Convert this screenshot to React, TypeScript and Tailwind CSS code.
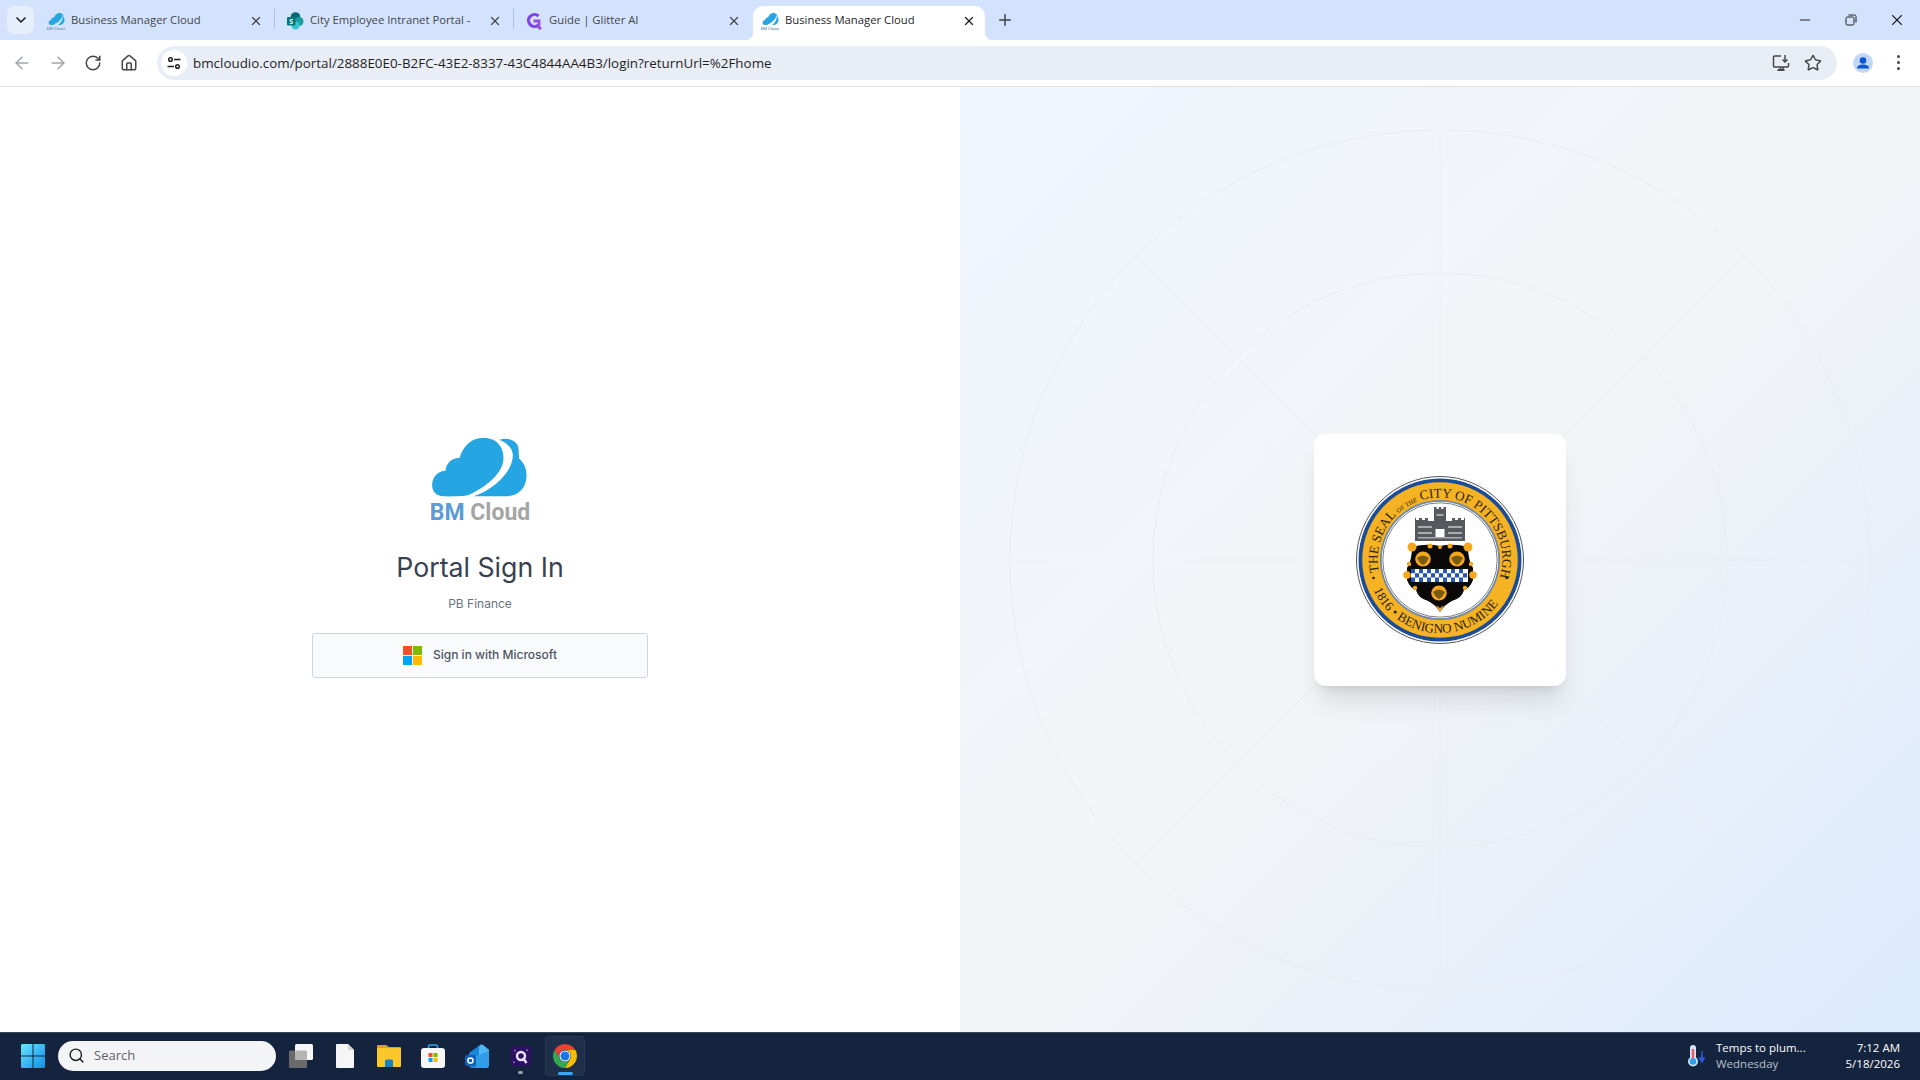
import { ArrowLeft, ArrowRight, ChevronDown, House, Minus, Plus, RotateCw, Search, Star, X } from "lucide-react";

const UI_FONT = "font-['Open_Sans',sans-serif]";

function BmCloud({ className }: { className?: string }) {
  return (
    <svg viewBox="395 50 290 180" className={className} aria-hidden>
      <path
        fill="#25a5e2"
        d="M430 228C408 226 397 212 398 192C399 168 416 152 438 151C440 128 458 112 480 113C490 78 516 52 552 52C590 52 612 78 612 112C612 150 578 190 505 225C490 228 455 229 430 228Z"
      />
      <path
        fill="#25a5e2"
        d="M600 58C620 52 645 56 654 74C660 88 656 104 660 116C674 128 682 146 681 168C680 205 655 228 620 228L522 228C590 205 640 150 640 105C640 85 622 66 600 58Z"
      />
    </svg>
  );
}

function BmFavicon() {
  return (
    <svg viewBox="0 0 18 18" className="h-[18px] w-[18px] shrink-0" aria-hidden>
      <path
        fill="#25a5e2"
        d="M2 12C1 10 2 8.500 4 8C4.500 6 5.500 5.500 7 5.500C8 3 10 1 12.500 1C15 1 15.500 3 15 5C14 8 10 11 6 13C4 13.300 2.800 13 2 12Z"
      />
      <path fill="#25a5e2" d="M14 1.500C16 1.500 16.500 3 16.500 5C17.500 6 18 8 17 10C16 12.500 14 13 11 13C14 11 16.500 7 15.500 3.500C15.200 2.500 14.800 2 14 1.500Z" />
      <text x="9" y="17.500" textAnchor="middle" fontSize="4.200" fontWeight="700" fill="#7b9cc0" fontFamily="'Open Sans',sans-serif">
        BM Cloud
      </text>
    </svg>
  );
}

function SharePointIcon() {
  return (
    <svg viewBox="0 0 18 18" className="h-[18px] w-[18px] shrink-0" aria-hidden>
      <circle cx="9.500" cy="5" r="4.800" fill="#036c70" />
      <circle cx="13" cy="9.500" r="4.500" fill="#1a9ba1" />
      <circle cx="9.500" cy="13.500" r="4" fill="#37c6d0" />
      <rect x="1" y="5" width="8.500" height="8.500" rx="1" fill="#03787c" />
      <text x="5.200" y="12" textAnchor="middle" fontSize="7" fontWeight="700" fill="#fff" fontFamily="'Open Sans',sans-serif">
        S
      </text>
    </svg>
  );
}

function GlitterIcon() {
  return (
    <svg viewBox="0 0 18 18" className="h-[18px] w-[18px] shrink-0" aria-hidden>
      <path d="M13.500 4A6 6 0 1 0 13.500 13" fill="none" stroke="#8142e6" strokeWidth="3.200" />
      <path d="M8.500 9H14V15.500L16 17" fill="none" stroke="#9d4edd" strokeWidth="2.800" />
    </svg>
  );
}

function Tab({
  title,
  icon,
  active,
  separator,
}: {
  title: string;
  icon: React.ReactNode;
  active?: boolean;
  separator?: boolean;
}) {
  if (active) {
    return (
      <div className="relative flex h-[34px] w-[232px] shrink-0 items-center rounded-t-[10px] bg-white pr-[9px] pb-[5px] pl-2">
        <span className="absolute bottom-0 -left-2 h-2 w-2 bg-[radial-gradient(circle_at_0_0,transparent_8px,#fff_8.500px)]" />
        <span className="absolute -right-2 bottom-0 h-2 w-2 bg-[radial-gradient(circle_at_100%_0,transparent_8px,#fff_8.500px)]" />
        {icon}
        <span className="ml-[6px] flex-1 truncate text-[11.300px] text-[#1f1f1f]">{title}</span>
        <X className="h-[14px] w-[14px] text-[#1f1f1f]" strokeWidth={2.200} />
      </div>
    );
  }
  return (
    <div className="relative flex h-[34px] w-[239px] shrink-0 items-center pr-[12px] pb-[5px] pl-[11px]">
      {icon}
      <span className="ml-[6px] flex-1 truncate text-[11.300px] text-[#45474a]">{title}</span>
      <X className="ml-2 h-[14px] w-[14px] text-[#45474a]" strokeWidth={2.200} />
      {separator && <span className="absolute top-[3px] right-0 h-5 w-px bg-[#a8c0e6]" />}
    </div>
  );
}

function RestoreIcon() {
  return (
    <svg viewBox="0 0 12 12" className="h-3 w-3" fill="none" stroke="#1f1f1f" strokeWidth="1" aria-hidden>
      <rect x="1" y="3" width="8" height="8" rx="1.500" />
      <path d="M3.500 1H9.500A1.500 1.500 0 0 1 11 2.500V8.500" />
    </svg>
  );
}

function SiteInfoIcon() {
  return (
    <svg viewBox="0 0 16 16" className="h-4 w-4" fill="none" stroke="#1f1f1f" strokeWidth="1.500" aria-hidden>
      <circle cx="4.500" cy="4.500" r="1.800" />
      <path d="M8 4.500H14.500" />
      <circle cx="11.500" cy="11.500" r="1.800" />
      <path d="M1.500 11.500H8" />
    </svg>
  );
}

function InstallIcon() {
  return (
    <svg viewBox="0 0 18 18" className="h-[18px] w-[18px]" fill="none" stroke="#474747" strokeWidth="1.500" aria-hidden>
      <path d="M9 2H2.500A1 1 0 0 0 1.500 3V12A1 1 0 0 0 2.500 13H15.500A1 1 0 0 0 16.500 12V9" />
      <path d="M5.500 16H12.500" strokeWidth="2" />
      <path d="M8.500 13V15.500M11 13V15.500" />
      <path d="M13 1V8M10.500 5.500L13 8L15.500 5.500" />
    </svg>
  );
}

function Seal() {
  return (
    <svg viewBox="-85 -85 170 170" className="h-[170px] w-[170px]" aria-hidden>
      <defs>
        <path id="seal-top" d="M-61 13A62.400 62.400 0 1 1 61 13" />
        <path id="seal-bottom" d="M-73 0A73 73 0 0 0 73 0" />
      </defs>
      <circle r="83.500" fill="#fff" stroke="#53565c" strokeWidth="1" />
      <circle r="81.500" fill="#1d4c97" />
      <circle r="77.800" fill="#f5b222" />
      <circle r="60" fill="#6d87a8" />
      <circle r="58.300" fill="#fff" />
      <circle r="57.200" fill="none" stroke="#3f4650" strokeWidth="0.700" />
      <text fontFamily="'Liberation Serif',serif" fill="#2b2210" fontSize="13.200">
        <textPath href="#seal-top" startOffset="1">
          THE SEAL <tspan fontSize="6.500">OF THE</tspan> CITY OF PITTSBURGH
        </textPath>
      </text>
      <text fontFamily="'Liberation Serif',serif" fill="#2b2210" fontSize="13">
        <textPath href="#seal-bottom" startOffset="31">
          1816 • BENIGNO NUMINE
        </textPath>
      </text>
      <circle cx="-66.500" cy="18" r="1.300" fill="#2b2210" />
      <circle cx="66.500" cy="18" r="1.300" fill="#2b2210" />
      {/* castle */}
      <path
        fill="#55585c"
        d="M-6 -53H-3.500V-51H-1.200V-53H1.200V-51H3.500V-53H6V-39H12V-42H15V-40H18V-42H21V-40H24V-42H25V-19H-25V-42H-24V-40H-21V-42H-18V-40H-15V-42H-12V-39H-6Z"
      />
      <path fill="#a9abad" d="M-22 -34H-8V-32H-22ZM8 -34H22V-32H8ZM-3.500 -46H3.500V-44H-3.500ZM-22 -28H-8V-26H-22ZM8 -28H22V-26H8ZM-22 -23H22V-21.500H-22Z" />
      <rect x="-4.500" y="-31" width="9" height="8" fill="#fff" />
      {/* shield */}
      <path
        fill="#0b0907"
        d="M-28 -13Q-14 -17 0 -14Q14 -17 28 -13Q28 0 33 8V20Q30 28 24 30Q22 38 12 41Q4 45 0 52Q-4 45 -12 41Q-22 38 -24 30Q-30 28 -33 20V8Q-28 0 -28 -13Z"
      />
      <g fill="#f5a81c">
        <circle cx="-28" cy="-13" r="4.500" />
        <circle cx="28" cy="-13" r="4.500" />
        <circle cx="-10" cy="-14" r="2.500" />
        <circle cx="10" cy="-14" r="2.500" />
        <circle cx="0" cy="-13" r="2" />
        <circle cx="-33" cy="15" r="3.800" />
        <circle cx="33" cy="15" r="3.800" />
        <circle cx="-31" cy="4" r="2.200" />
        <circle cx="31" cy="4" r="2.200" />
        <circle cx="-25" cy="28" r="2.200" />
        <circle cx="25" cy="28" r="2.200" />
        <path d="M-4 45L0 52L4 45L0 48Z" />
        <ellipse cx="-17" cy="-1" rx="7.800" ry="7.500" />
        <ellipse cx="17" cy="-1" rx="7.800" ry="7.500" />
        <ellipse cx="-1" cy="33" rx="7.800" ry="7.500" />
      </g>
      <g fill="#7a5a10">
        <path d="M-23 -2Q-17 -7 -11 -2L-14 3L-17 5L-20 3Z" />
        <path d="M11 -2Q17 -7 23 -2L20 3L17 5L14 3Z" />
        <path d="M-7 32Q-1 27 5 32L2 37L-1 39L-4 37Z" />
      </g>
      {/* chequy band */}
      <rect x="-29" y="9" width="57" height="13" fill="#fff" />
      <g fill="#2456b5">
        <path d="M-29 9h4v4.300h-4zM-21 9h4v4.300h-4zM-13 9h4v4.300h-4zM-5 9h4v4.300h-4zM3 9h4v4.300h-4zM11 9h4v4.300h-4zM19 9h4v4.300h-4z" />
        <path d="M-25 13.300h4v4.300h-4zM-17 13.300h4v4.300h-4zM-9 13.300h4v4.300h-4zM-1 13.300h4v4.300h-4zM7 13.300h4v4.300h-4zM15 13.300h4v4.300h-4zM23 13.300h4v4.300h-4z" />
        <path d="M-29 17.600h4v4.400h-4zM-21 17.600h4v4.400h-4zM-13 17.600h4v4.400h-4zM-5 17.600h4v4.400h-4zM3 17.600h4v4.400h-4zM11 17.600h4v4.400h-4zM19 17.600h4v4.400h-4z" />
      </g>
    </svg>
  );
}

function Backdrop() {
  return (
    <svg viewBox="0 0 960 946" className="absolute inset-0 h-full w-full" fill="none" stroke="#eaecf0" aria-hidden>
      <circle cx="480" cy="473" r="430" />
      <circle cx="480" cy="473" r="287" />
      <path d="M480 43V903M50 473H910" />
      <path d="M176 169L784 777M784 169L176 777" />
    </svg>
  );
}

function WindowsLogo() {
  return (
    <svg viewBox="0 0 24 24" className="h-6 w-6" aria-hidden>
      <defs>
        <linearGradient id="win-g" x1="0" y1="0" x2="1" y2="1">
          <stop offset="0" stopColor="#6be3ff" />
          <stop offset="1" stopColor="#0f8fe8" />
        </linearGradient>
      </defs>
      <path fill="url(#win-g)" d="M0 1.500A1.500 1.500 0 0 1 1.500 0H11.500V11.500H0ZM12.500 0H22.500A1.500 1.500 0 0 1 24 1.500V11.500H12.500ZM0 12.500H11.500V24H1.500A1.500 1.500 0 0 1 0 22.500ZM12.500 12.500H24V22.500A1.500 1.500 0 0 1 22.500 24H12.500Z" />
    </svg>
  );
}

function TaskViewIcon() {
  return (
    <svg viewBox="0 0 24 24" className="h-6 w-6" aria-hidden>
      <rect x="0" y="6.500" width="18" height="17.500" rx="1.500" fill="#6b6b6b" />
      <rect x="6" y="0" width="18" height="16" rx="1.500" fill="#f7f7f7" />
      <rect x="6" y="6.500" width="12" height="9.500" rx="1" fill="#b5b5b5" />
    </svg>
  );
}

function FileIcon() {
  return (
    <svg viewBox="0 0 18 24" className="h-6 w-[18px]" aria-hidden>
      <path d="M1 0H12L18 6V23A1 1 0 0 1 17 24H1A1 1 0 0 1 0 23V1A1 1 0 0 1 1 0Z" fill="#f6f6f6" />
      <path d="M12 0L18 6H13A1 1 0 0 1 12 5Z" fill="#d5d5d5" />
    </svg>
  );
}

function ExplorerIcon() {
  return (
    <svg viewBox="0 0 24 22" className="h-[22px] w-6" aria-hidden>
      <path d="M1 0H9L12 2H23A1 1 0 0 1 24 3V8H0V1A1 1 0 0 1 1 0Z" fill="#d9a21b" />
      <rect x="0" y="3" width="24" height="19" rx="1" fill="#fcc62d" />
      <path d="M8 16A1.500 1.500 0 0 1 9.500 14.500H14.500A1.500 1.500 0 0 1 16 16V22H8Z" fill="#1a7fc4" />
    </svg>
  );
}

function StoreIcon() {
  return (
    <svg viewBox="0 0 24 24" className="h-6 w-6" aria-hidden>
      <path d="M7.500 5V2.500A1.500 1.500 0 0 1 9 1H15A1.500 1.500 0 0 1 16.500 2.500V5" fill="none" stroke="#29a7e8" strokeWidth="1.600" />
      <rect x="0" y="4" width="24" height="20" rx="3" fill="#f7f7f7" />
      <rect x="7.500" y="9" width="4" height="4" fill="#f25022" />
      <rect x="12.500" y="9" width="4" height="4" fill="#7fba00" />
      <rect x="7.500" y="14" width="4" height="4" fill="#00a4ef" />
      <rect x="12.500" y="14" width="4" height="4" fill="#ffb900" />
    </svg>
  );
}

function OutlookIcon() {
  return (
    <svg viewBox="0 0 24 24" className="h-6 w-6" aria-hidden>
      <path d="M4 9L15 1Q16.500 0 18 1L24 6V21A3 3 0 0 1 21 24H7A3 3 0 0 1 4 21Z" fill="#1a86d9" />
      <path d="M14 3L15 1Q16.500 0 18 1L24 6V13L14 16Z" fill="#4fb6ef" />
      <path d="M9 13L24 7V21A3 3 0 0 1 21 24H11Z" fill="#2f9de8" />
      <rect x="0" y="11" width="11" height="11" rx="2" fill="#0f5fb3" />
      <circle cx="5.500" cy="16.500" r="2.600" fill="none" stroke="#fff" strokeWidth="1.500" />
    </svg>
  );
}

function ClipIcon() {
  return (
    <svg viewBox="0 0 20 20" className="h-5 w-5" aria-hidden>
      <rect width="20" height="20" rx="4" fill="#2e1065" />
      <circle cx="10" cy="10" r="4" fill="none" stroke="#e9e4ff" strokeWidth="2.400" />
      <path d="M12 12L15.500 17" stroke="#e9e4ff" strokeWidth="2.400" />
      <path d="M4 3.500L5 5.500L3 5ZM16 3L17 5L15 4.500ZM3 15L4 17L2 16.500Z" fill="#c4b5fd" />
    </svg>
  );
}

function ChromeIcon() {
  return (
    <svg viewBox="0 0 24 24" className="h-6 w-6" aria-hidden>
      <path d="M12 6H22.390A12 12 0 0 0 1.610 6L6.800 15A6 6 0 0 1 12 6Z" fill="#ea4335" />
      <path d="M12 6H22.390A12 12 0 0 1 12 24L17.200 15A6 6 0 0 0 12 6Z" fill="#fbbc04" />
      <path d="M1.610 6A12 12 0 0 0 12 24L17.200 15A6 6 0 0 1 6.800 15Z" fill="#34a853" />
      <circle cx="12" cy="12" r="5.600" fill="#fff" />
      <circle cx="12" cy="12" r="4.500" fill="#1a73e8" />
    </svg>
  );
}

function ThermometerIcon() {
  return (
    <svg viewBox="0 0 18 22" className="h-[22px] w-[18px]" aria-hidden>
      <path d="M3 3A3 3 0 0 1 9 3V12.500A5 5 0 1 1 3 12.500Z" fill="#cfe6fb" />
      <rect x="4.800" y="4" width="2.400" height="10" fill="#f0566a" />
      <circle cx="6" cy="16.500" r="3.300" fill="#2f9ee8" />
      <path d="M15 6V15M12.500 13L15 17L17.500 13Z" stroke="#2b5ad8" strokeWidth="1.500" fill="#2b5ad8" />
    </svg>
  );
}

export default function App() {
  return (
    <div className={`relative flex h-screen w-full flex-col overflow-hidden bg-white ${UI_FONT}`}>
      {/* tab strip */}
      <div className="flex h-10 shrink-0 items-end bg-[#d3e3fd]">
        <div className="mb-[6px] ml-[7px] flex h-[28px] w-[27px] shrink-0 items-center justify-center rounded-lg bg-[#e6eefc]">
          <ChevronDown className="h-4 w-4 text-[#1f1f1f]" strokeWidth={2.500} />
        </div>
        <div className="ml-[2px] flex items-end">
          <Tab title="Business Manager Cloud" icon={<BmFavicon />} separator />
          <Tab title="City Employee Intranet Portal -" icon={<SharePointIcon />} separator />
          <Tab title="Guide | Glitter AI" icon={<GlitterIcon />} />
          <Tab title="Business Manager Cloud" icon={<BmFavicon />} active />
        </div>
        <div className="mb-[6px] ml-[6px] flex h-7 w-7 items-center justify-center">
          <Plus className="h-[18px] w-[18px] text-[#3c4043]" strokeWidth={2} />
        </div>
        <div className="ml-auto flex h-10 items-center self-start">
          <div className="flex w-[46px] justify-center">
            <Minus className="h-4 w-4 text-[#1f1f1f]" strokeWidth={1.500} />
          </div>
          <div className="flex w-[46px] justify-center">
            <RestoreIcon />
          </div>
          <div className="flex w-[46px] justify-center">
            <X className="h-[18px] w-[18px] text-[#1f1f1f]" strokeWidth={1.500} />
          </div>
        </div>
      </div>

      {/* toolbar */}
      <div className="flex h-[47px] shrink-0 items-center rounded-t-[8px] border-b border-[#e3e3e3] bg-white pb-px pl-[12px] pr-[20px]">
        <div className="flex items-center gap-[16px]">
          <ArrowLeft className="h-5 w-5 text-[#a0a3a8]" strokeWidth={1.800} />
          <ArrowRight className="h-5 w-5 text-[#a0a3a8]" strokeWidth={1.800} />
          <RotateCw className="h-[18px] w-[18px] text-[#474747]" strokeWidth={2} />
          <House className="ml-[2px] h-[18px] w-[18px] text-[#474747]" strokeWidth={2} />
        </div>
        <div className="ml-[19px] flex h-[34px] flex-1 items-center rounded-[17px] bg-[#e9eef6] pl-1">
          <div className="flex h-[26px] w-[26px] items-center justify-center rounded-full bg-white">
            <SiteInfoIcon />
          </div>
          <span className="ml-[6px] pt-px text-[13.400px] text-[#1f1f1f]">
            bmcloudio.com/portal/2888E0E0-B2FC-43E2-8337-43C4844AA4B3/login?returnUrl=%2Fhome
          </span>
          <div className="ml-auto flex items-center gap-[14px] pr-[15px]">
            <InstallIcon />
            <Star className="h-[18px] w-[18px] text-[#474747]" strokeWidth={2} />
          </div>
        </div>
        <div className="ml-4 flex h-5 w-5 items-center justify-center rounded-full bg-[#c2d7f8]">
          <svg viewBox="0 0 20 20" className="h-5 w-5" fill="#0b57d0" aria-hidden>
            <circle cx="10" cy="7.500" r="3.300" />
            <path d="M4 15.500C4 12.500 7 11.500 10 11.500C13 11.500 16 12.500 16 15.500Z" />
          </svg>
        </div>
        <div className="ml-[24px] flex flex-col gap-[2.500px]">
          <span className="h-[3.500px] w-[3.500px] rounded-full bg-[#474747]" />
          <span className="h-[3.500px] w-[3.500px] rounded-full bg-[#474747]" />
          <span className="h-[3.500px] w-[3.500px] rounded-full bg-[#474747]" />
        </div>
      </div>

      {/* page */}
      <div className="grid h-[946px] shrink-0 grid-cols-2 font-['Inter',sans-serif]">
        <div className="flex flex-col items-center justify-center bg-white pb-[6px]">
          <BmCloud className="ml-[-1px] h-[60px] w-[97px]" />
          <div className="mt-[3px] font-['Roboto',sans-serif] text-[23px] leading-[25px] font-bold">
            <span className="text-[#5c9bd6]">BM</span> <span className="text-[#a5a5a5]">Cloud</span>
          </div>
          <h1 className="mt-[24px] text-[26.700px] leading-9 font-normal text-[#374151]">Portal Sign In</h1>
          <p className="mt-[11px] text-xs leading-4 text-[#6b7280]">PB Finance</p>
          <button
            type="button"
            className="mt-[21px] flex h-[45px] w-[336px] items-center justify-center gap-[11px] rounded-[3px] border border-[#d1d5db] bg-[#f9fafb] text-xs font-medium text-[#4b5563]"
          >
            <span className="grid h-[19px] w-[19px] grid-cols-2 gap-px">
              <span className="bg-[#f25022]" />
              <span className="bg-[#7fba00]" />
              <span className="bg-[#00a4ef]" />
              <span className="bg-[#ffb900]" />
            </span>
            Sign in with Microsoft
          </button>
        </div>
        <div className="relative flex items-center justify-center bg-linear-to-br from-[#eff6ff] via-[#f3f4f6] to-[#dbeafe]">
          <Backdrop />
          <div className="relative flex h-[252px] w-[252px] items-center justify-center rounded-xl bg-white shadow-xl">
            <Seal />
          </div>
        </div>
      </div>

      {/* taskbar */}
      <div className="absolute right-0 bottom-0 left-0 flex h-12 items-center border-t border-[#3a475c] bg-[#14243f] pb-[2px]">
        <div className="ml-[21px] flex">
          <WindowsLogo />
        </div>
        <div className="ml-[13px] flex h-[30px] w-[218px] items-center rounded-full bg-[#f3f4f6] pl-[10px]">
          <Search className="h-[17px] w-[17px] text-[#1f1f1f]" strokeWidth={2} />
          <span className="ml-[9px] pt-px text-[13px] text-[#5f6368]">Search</span>
        </div>
        <div className="ml-[13px] flex items-center">
          <TaskViewIcon />
          <div className="ml-[23px]"><FileIcon /></div>
          <div className="ml-[23px]"><ExplorerIcon /></div>
          <div className="ml-[20px]"><StoreIcon /></div>
          <div className="ml-[20px]"><OutlookIcon /></div>
          <div className="relative ml-[22px]">
            <ClipIcon />
            <span className="absolute -bottom-[8px] left-[7px] h-[3px] w-[5px] rounded-full bg-[#9aa3b0]" />
          </div>
          <div className="relative ml-[14px] flex h-10 w-10 items-center justify-center rounded-[4px] border border-[#2a3952] bg-[#1f2f4a]">
            <ChromeIcon />
            <span className="absolute bottom-[0px] left-[12px] h-[3px] w-[15px] rounded-full bg-[#3ba7f5]" />
          </div>
        </div>
        <div className="ml-auto flex items-center pr-[20px] text-[11.500px] leading-4 text-white">
          <ThermometerIcon />
          <div className="ml-[11px] w-[136px]">
            <div>Temps to plum...</div>
            <div className="text-[#b9c0cb]">Wednesday</div>
          </div>
          <div className="w-[48px] text-right whitespace-nowrap">
            <div className="flex justify-end">7:12 AM</div>
            <div className="flex justify-end">5/18/2026</div>
          </div>
        </div>
      </div>
    </div>
  );
}
